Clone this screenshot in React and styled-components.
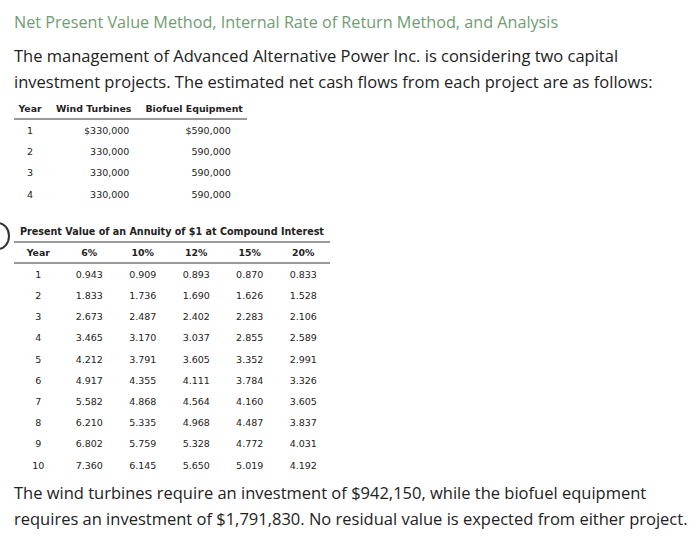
import React from "react";
import styled, { createGlobalStyle } from "styled-components";

const G = createGlobalStyle`
  html,body{margin:0;padding:0;background:#fff;}
  body{width:700px;height:542px;overflow:hidden;font-family:"Open Sans",sans-serif;color:#222;}
`;
const Page = styled.div`position:relative;padding:11px 0 0 14px;`;
const Title = styled.div`font-size:16.2px;color:#6f9d73;line-height:22px;`;
const Para = styled.p`margin:${p=>p.m||"10px 0 0"};font-size:16.5px;line-height:26px;color:#222;`;
const Tbl = styled.table`border-collapse:collapse;font-family:"DejaVu Sans",Verdana,sans-serif;font-size:9.5px;color:#222;margin-top:${p=>p.mt||0}px;`;
const Cap = styled.caption`font-weight:bold;font-size:9.6px;text-align:center;padding:3px 0 4px;border-bottom:2px solid #999;white-space:nowrap;`;
const Th = styled.th`font-weight:bold;font-size:9.4px;padding:4px ${p=>p.px||8}px 4px;text-align:${p=>p.a||"center"};border-bottom:2px solid #999;white-space:nowrap;`;
const Td = styled.td`padding:0 ${p=>p.px||8}px;height:21.2px;text-align:${p=>p.a||"center"};`;
const Curve = styled.div`position:absolute;left:-14px;top:222px;width:20px;height:24px;border:2px solid #333;border-radius:50%;`;

const rows1=[["1","$330,000","$590,000"],["2","330,000","590,000"],["3","330,000","590,000"],["4","330,000","590,000"]];
const pv=[["0.943","0.909","0.893","0.870","0.833"],["1.833","1.736","1.690","1.626","1.528"],["2.673","2.487","2.402","2.283","2.106"],["3.465","3.170","3.037","2.855","2.589"],["4.212","3.791","3.605","3.352","2.991"],["4.917","4.355","4.111","3.784","3.326"],["5.582","4.868","4.564","4.160","3.605"],["6.210","5.335","4.968","4.487","3.837"],["6.802","5.759","5.328","4.772","4.031"],["7.360","6.145","5.650","5.019","4.192"]];

export default function App(){
  return <Page><G/>
    <Curve/>
    <Title>Net Present Value Method, Internal Rate of Return Method, and Analysis</Title>
    <Para>The management of Advanced Alternative Power Inc. is considering two capital investment projects. The estimated net cash flows from each project are as follows:</Para>
    <Tbl mt={4}>
      <thead><tr><Th px={3} style={{width:26}}>Year</Th><Th a="left" px={10}>Wind Turbines</Th><Th a="left" px={4}>Biofuel Equipment</Th></tr></thead>
      <tbody>{rows1.map(r=><tr key={r[0]}><Td px={3}>{r[0]}</Td><Td a="right" px={12}>{r[1]}</Td><Td a="right" px={16}>{r[2]}</Td></tr>)}</tbody>
    </Tbl>
    <Tbl mt={18} style={{width:316}}>
      <Cap>Present Value of an Annuity of $1 at Compound Interest</Cap>
      <thead><tr>{["Year","6%","10%","12%","15%","20%"].map(h=><Th key={h}>{h}</Th>)}</tr></thead>
      <tbody>{pv.map((r,i)=><tr key={i}><Td>{i+1}</Td>{r.map((v,j)=><Td key={j}>{v}</Td>)}</tr>)}</tbody>
    </Tbl>
    <Para m="4px 0 0">The wind turbines require an investment of $942,150, while the biofuel equipment requires an investment of $1,791,830. No residual value is expected from either project.</Para>
  </Page>;
}
